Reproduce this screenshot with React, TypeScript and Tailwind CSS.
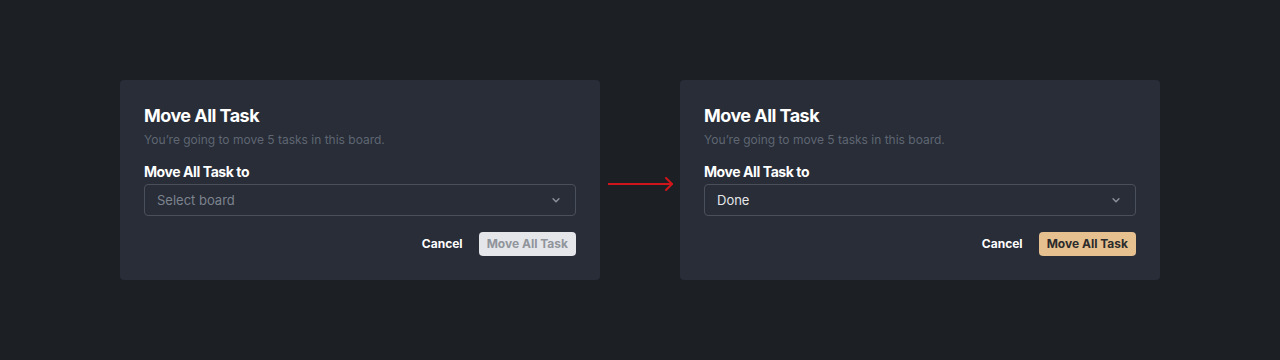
import React from "react";

function Chevron() {
  return (
    <svg width="14" height="14" viewBox="0 0 24 24" fill="none" stroke="#8b909a" strokeWidth="2.5" strokeLinecap="round" strokeLinejoin="round">
      <path d="m7 10 5 5 5-5" />
    </svg>
  );
}

function Dialog({ value, active }: { value?: string; active: boolean }) {
  return (
    <div className="w-[480px] rounded-[4px] bg-[#282d38] px-6 pt-6 pb-6">
      <div className="text-[18px] leading-6 font-bold text-white tracking-[-0.03em]">Move All Task</div>
      <div className="mt-1 text-[12px] leading-4 text-[#5f6672]">You’re going to move 5 tasks in this board.</div>
      <div className="mt-[14px] text-[14px] leading-5 font-bold text-white tracking-[-0.03em]">Move All Task to</div>
      <div className="mt-0.5 h-8 rounded-[4px] border border-[#4a505b] flex items-center justify-between pl-3 pr-3">
        <span className={value ? "mt-px text-[13px] text-[#e6e7ea]" : "mt-px text-[13px] text-[#7d838e]"}>{value ?? "Select board"}</span>
        <Chevron />
      </div>
      <div className="mt-4 flex items-center justify-end gap-4">
        <button className="text-[12px] font-bold text-white leading-6">Cancel</button>
        <button
          className={
            active
              ? "h-6 px-2 rounded-[4px] bg-[#e6c08f] text-[12px] font-bold text-[#2b2b2b]"
              : "h-6 px-2 rounded-[4px] bg-[#e4e6ea] text-[12px] font-bold text-[#90949b]"
          }
        >
          Move All Task
        </button>
      </div>
    </div>
  );
}

export default function App() {
  return (
    <div
      className="w-[1280px] h-[360px] bg-[#1c1f24] flex items-start justify-center pt-20"
      style={{ fontFamily: "Inter, 'Noto Sans', sans-serif" }}
    >
      <Dialog active={false} />
      <div className="w-20 h-[200px] flex items-start justify-start pl-2 pt-[96px]">
        <svg width="66" height="16" viewBox="0 0 66 16" fill="none" stroke="#d0161b" strokeWidth="2" strokeLinecap="round" strokeLinejoin="round">
          <path d="M0 8 H64" />
          <path d="M58 2 L64 8 L58 14" />
        </svg>
      </div>
      <Dialog value="Done" active={true} />
    </div>
  );
}
